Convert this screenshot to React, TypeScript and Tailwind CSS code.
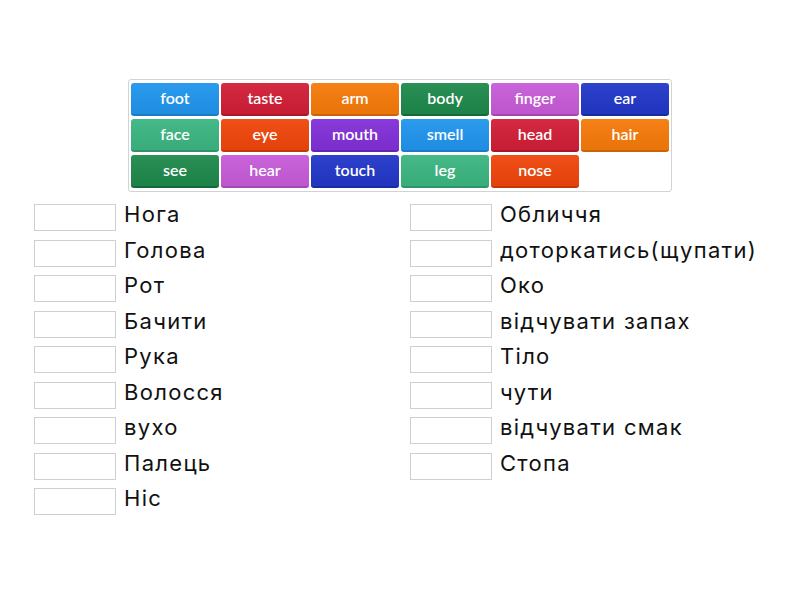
import React from "react";

type Tile = { t: string; c: string; b: string };

const tiles: Tile[] = [
  { t: "foot", c: "bg-[#2196ee]", b: "border-[#1a7cc4]" },
  { t: "taste", c: "bg-[#d21f38]", b: "border-[#a8162a]" },
  { t: "arm", c: "bg-[#f67c0b]", b: "border-[#c86308]" },
  { t: "body", c: "bg-[#1f8a4c]", b: "border-[#16693a]" },
  { t: "finger", c: "bg-[#c85cd9]", b: "border-[#a446b3]" },
  { t: "ear", c: "bg-[#2338c9]", b: "border-[#1a2aa0]" },
  { t: "face", c: "bg-[#3db682]", b: "border-[#2f9468]" },
  { t: "eye", c: "bg-[#f0470c]", b: "border-[#c33708]" },
  { t: "mouth", c: "bg-[#8231d8]", b: "border-[#6724ae]" },
  { t: "smell", c: "bg-[#2196ee]", b: "border-[#1a7cc4]" },
  { t: "head", c: "bg-[#d21f38]", b: "border-[#a8162a]" },
  { t: "hair", c: "bg-[#f67c0b]", b: "border-[#c86308]" },
  { t: "see", c: "bg-[#1f8a4c]", b: "border-[#16693a]" },
  { t: "hear", c: "bg-[#c85cd9]", b: "border-[#a446b3]" },
  { t: "touch", c: "bg-[#2338c9]", b: "border-[#1a2aa0]" },
  { t: "leg", c: "bg-[#3db682]", b: "border-[#2f9468]" },
  { t: "nose", c: "bg-[#f0470c]", b: "border-[#c33708]" },
];

const left = ["Нога", "Голова", "Рот", "Бачити", "Рука", "Волосся", "вухо", "Палець", "Ніс"];
const right = [
  "Обличчя",
  "доторкатись(щупати)",
  "Око",
  "відчувати запах",
  "Тіло",
  "чути",
  "відчувати смак",
  "Стопа",
];

function Row({ label }: { label: string }) {
  return (
    <div className="flex h-[35.5px] items-start">
      <div className="h-[27px] w-[82px] shrink-0 border border-[#cfcfcf] bg-white" />
      <div
        className="ml-[8px] -mt-[4px] whitespace-nowrap text-[22px] font-normal leading-[28px] tracking-[1.3px] text-[#111]"
        style={{ fontFamily: "Inter, 'Noto Sans', sans-serif" }}
      >
        {label}
      </div>
    </div>
  );
}

export default function App() {
  return (
    <div className="h-[600px] w-[800px] bg-white">
      <div className="pt-[79px] flex justify-center">
        <div className="w-[544px] rounded-[3px] border border-[#d3d3d3] bg-white px-[2px] pt-[3px] pb-[3px]">
          <div className="grid grid-cols-6 gap-x-[2px] gap-y-[3px]">
            {tiles.map((tl) => (
              <div
                key={tl.t}
                className={`${tl.c} ${tl.b} flex h-[33px] items-center justify-center rounded-[3px] border-b-2 bg-gradient-to-b from-white/5 to-black/5 pb-[1px] text-[16px] font-semibold text-white`}
                style={{ fontFamily: "Lato, 'Noto Sans', sans-serif" }}
              >
                {tl.t}
              </div>
            ))}
          </div>
        </div>
      </div>
      <div className="mt-[12px] flex pl-[34px]">
        <div className="flex w-[376px] flex-col">
          {left.map((l) => (
            <Row key={l} label={l} />
          ))}
        </div>
        <div className="flex flex-col">
          {right.map((l) => (
            <Row key={l} label={l} />
          ))}
        </div>
      </div>
    </div>
  );
}
